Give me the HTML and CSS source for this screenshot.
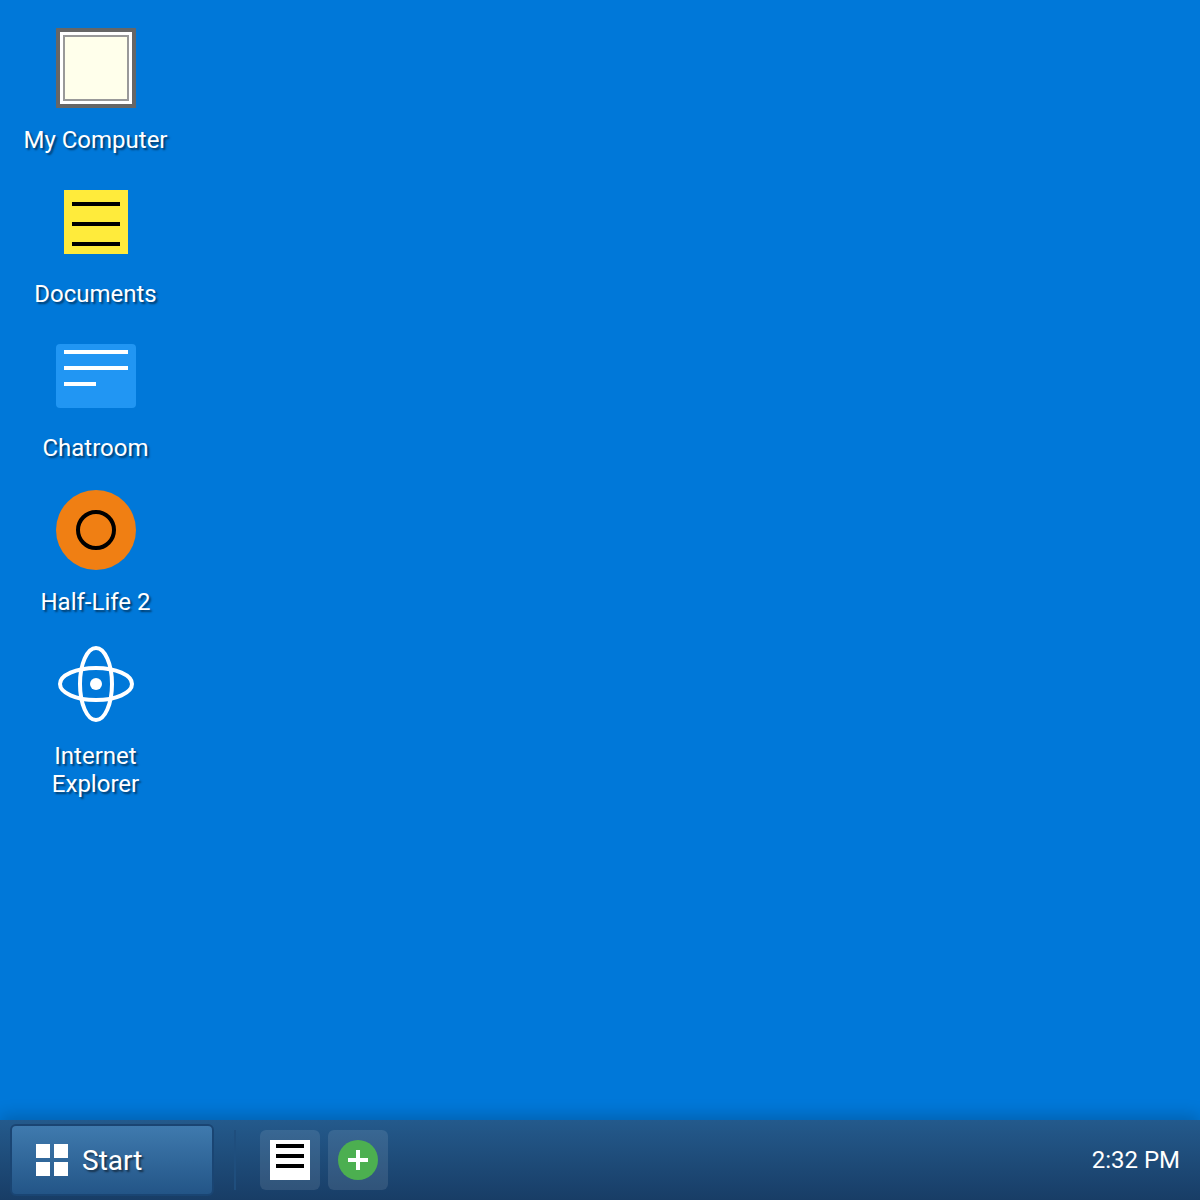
FILE: index.html
```html
<!DOCTYPE html>
<html lang="en">
<head>
<meta charset="utf-8">
<meta name="viewport" content="width=device-width, initial-scale=1">
<title>Desktop</title>
<link rel="stylesheet" href="styles.css">
</head>
<body>
<main class="desktop">
  <button class="shortcut" type="button">
    <svg class="shortcut-icon" viewBox="0 0 80 80" aria-hidden="true">
      <rect width="80" height="80" fill="#666"/>
      <rect x="4" y="4" width="72" height="72" fill="#fff"/>
      <rect x="7" y="7" width="66" height="66" fill="#999"/>
      <rect x="9" y="9" width="62" height="62" fill="#ffffeb"/>
    </svg>
    <span>My Computer</span>
  </button>
  <button class="shortcut" type="button">
    <svg class="shortcut-icon" viewBox="0 0 80 80" aria-hidden="true">
      <rect x="8" y="8" width="64" height="64" fill="#ffeb3b"/>
      <path d="M16 22h48M16 42h48M16 62h48" stroke="#000" stroke-width="4"/>
    </svg>
    <span>Documents</span>
  </button>
  <button class="shortcut" type="button">
    <svg class="shortcut-icon" viewBox="0 0 80 80" aria-hidden="true">
      <rect y="8" width="80" height="64" rx="4" fill="#2196f3"/>
      <path d="M8 16h64M8 32h64M8 48h32" stroke="#fff" stroke-width="4"/>
    </svg>
    <span>Chatroom</span>
  </button>
  <button class="shortcut" type="button">
    <svg class="shortcut-icon" viewBox="0 0 80 80" aria-hidden="true">
      <circle cx="40" cy="40" r="40" fill="#f07f13"/>
      <circle cx="40" cy="40" r="18" fill="none" stroke="#000" stroke-width="4"/>
    </svg>
    <span>Half-Life 2</span>
  </button>
  <button class="shortcut" type="button">
    <svg class="shortcut-icon" viewBox="0 0 80 80" aria-hidden="true">
      <g fill="none" stroke="#fff" stroke-width="4">
        <ellipse cx="40" cy="40" rx="36" ry="16"/>
        <ellipse cx="40" cy="40" rx="16" ry="36"/>
      </g>
      <circle cx="40" cy="40" r="6" fill="#fff"/>
    </svg>
    <span>Internet Explorer</span>
  </button>
</main>
<footer class="taskbar">
  <button class="start" type="button">
    <svg class="start-icon" viewBox="0 0 32 32" aria-hidden="true">
      <path d="M0 0h14v14H0zM18 0h14v14H18zM0 18h14v14H0zM18 18h14v14H18z" fill="#fff"/>
    </svg>
    <span>Start</span>
  </button>
  <div class="quick-launch">
    <button class="quick-button" type="button" aria-label="Notes">
      <svg class="quick-icon" viewBox="0 0 40 40" aria-hidden="true">
        <rect width="40" height="40" fill="#fff"/>
        <path d="M6 6h28M6 16h28M6 26h28" stroke="#000" stroke-width="4"/>
      </svg>
    </button>
    <button class="quick-button" type="button" aria-label="Add">
      <svg class="quick-icon" viewBox="0 0 40 40" aria-hidden="true">
        <circle cx="20" cy="20" r="20" fill="#4caf50"/>
        <path d="M10 20h20M20 10v20" stroke="#fff" stroke-width="4"/>
      </svg>
    </button>
  </div>
  <time class="clock" datetime="14:32">2:32 PM</time>
</footer>
</body>
</html>
```
FILE: styles.css
```css
* {
  box-sizing: border-box;
}

body {
  margin: 0;
  min-height: 100vh;
  display: flex;
  flex-direction: column;
  background: #0078d9;
  color: #fff;
  font-family: Roboto, "Liberation Sans", sans-serif;
}

button {
  margin: 0;
  padding: 0;
  border: 0;
  background: none;
  color: inherit;
  font: inherit;
  cursor: pointer;
}

.desktop {
  flex: 1;
  display: flex;
  flex-direction: column;
  align-items: flex-start;
  gap: 28px;
  padding: 28px 20px;
}

.shortcut {
  width: 151px;
  display: flex;
  flex-direction: column;
  align-items: center;
  gap: 18px;
  font-size: 24px;
  line-height: 28px;
  text-align: center;
  text-shadow: 2px 2px 2px rgba(0, 0, 0, 0.5);
}

.shortcut-icon {
  width: 80px;
  height: 80px;
  display: block;
}

.taskbar {
  height: 80px;
  display: flex;
  align-items: center;
  padding: 0 20px 0 10px;
  background: linear-gradient(#245a8c, #183d66);
  box-shadow: 0 -4px 16px rgba(0, 0, 0, 0.2);
}

.start {
  width: 204px;
  height: 72px;
  display: flex;
  align-items: center;
  gap: 14px;
  padding: 0 24px;
  border: 2px solid #1a4573;
  border-radius: 6px;
  background: linear-gradient(#3f7aae, #235587);
  font-size: 28px;
  text-shadow: 2px 2px 2px rgba(0, 0, 0, 0.5);
}

.start-icon {
  width: 32px;
  height: 32px;
}

.quick-launch {
  display: flex;
  gap: 8px;
  margin-left: 20px;
  padding-left: 24px;
  border-left: 2px solid #1f4e7d;
}

.quick-button {
  width: 60px;
  height: 60px;
  padding: 10px;
  border-radius: 6px;
  background: rgba(255, 255, 255, 0.1);
}

.quick-icon {
  width: 40px;
  height: 40px;
  display: block;
}

.clock {
  margin-left: auto;
  font-size: 24px;
}
```
